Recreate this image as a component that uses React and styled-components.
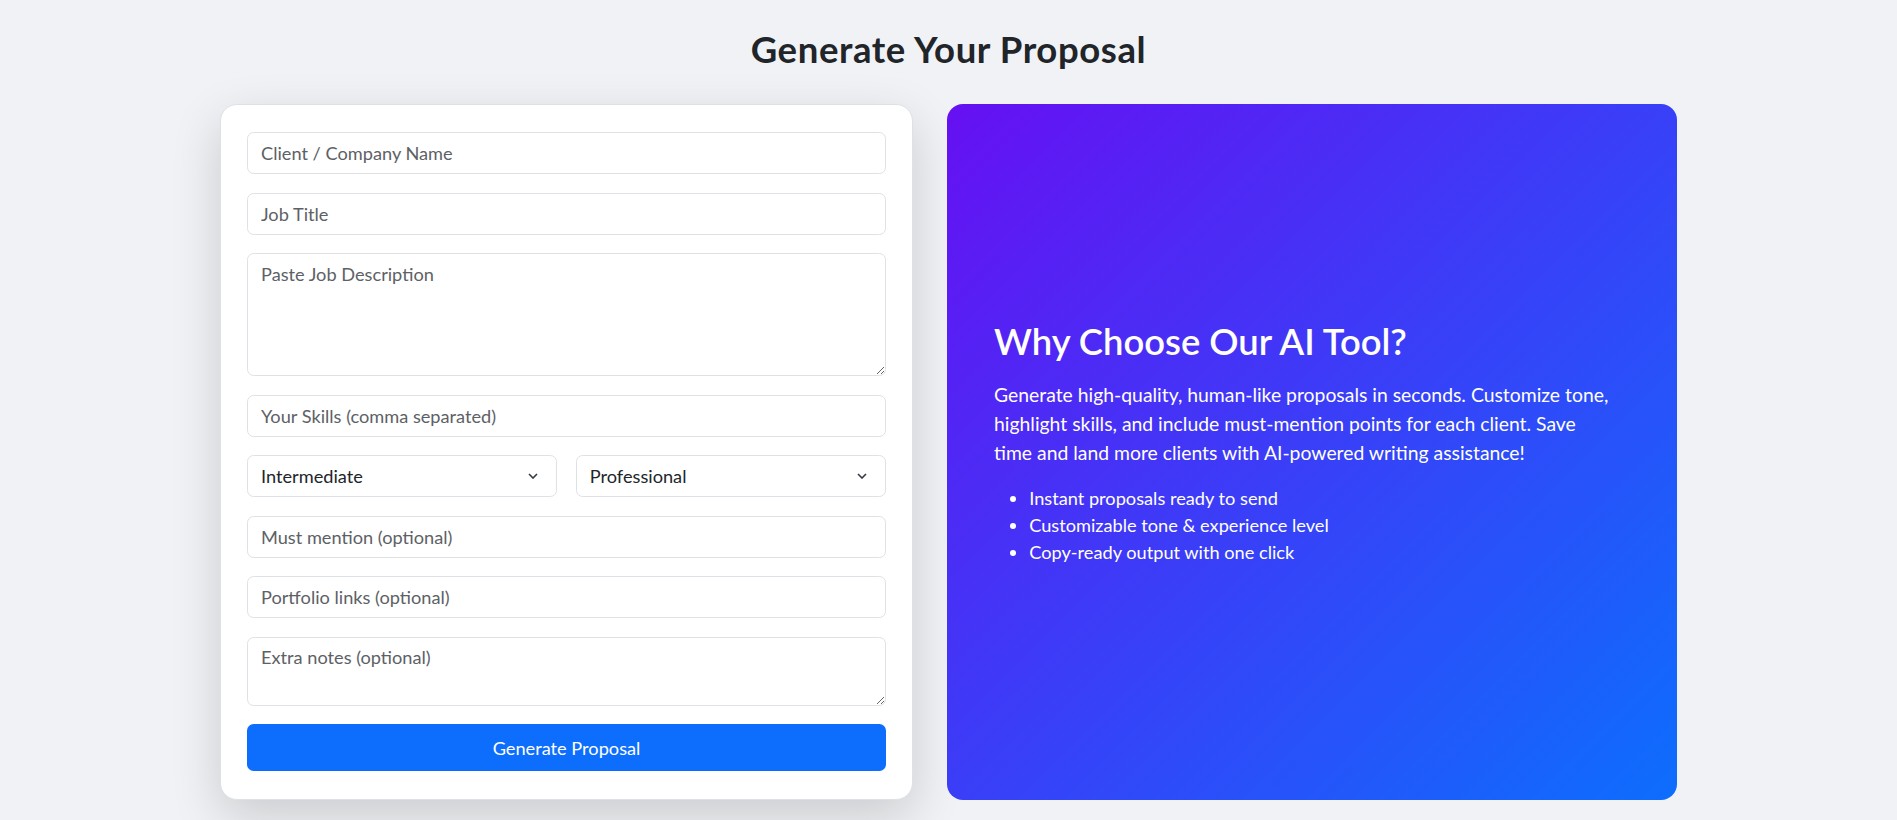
import React from "react";
import styled, { createGlobalStyle } from "styled-components";

const GlobalStyle = createGlobalStyle`
  * {
    box-sizing: border-box;
  }
  body {
    margin: 0;
    background: #f0f2f5;
    font-family: Lato, "Noto Sans", sans-serif;
    color: #212529;
  }
`;

const Page = styled.div`
  padding: 28px 0 20px;
`;

const PageTitle = styled.h2`
  margin: 0 0 34px;
  text-align: center;
  font-size: 36.5px;
  font-weight: 700;
  letter-spacing: 0.6px;
  line-height: 1.16;
  color: #212529;
`;

const Row = styled.div`
  display: flex;
  justify-content: center;
  align-items: stretch;
  gap: 34px;
`;

const FormCard = styled.form`
  width: 693px;
  padding: 27px 26px 28px;
  background: #fff;
  border: 1px solid #dee2e6;
  border-radius: 17px;
  box-shadow: 0 17px 50px rgba(0, 0, 0, 0.16);
`;

const fieldBase = `
  display: block;
  width: 100%;
  margin: 0 0 18.5px;
  padding: 6.6px 13px;
  font-family: inherit;
  font-size: 18.2px;
  line-height: 1.5;
  color: #212529;
  background: #fff;
  border: 1px solid #dee2e6;
  border-radius: 6.6px;
  outline: none;
  &::placeholder {
    color: #5d6166;
    opacity: 1;
  }
`;

const Input = styled.input`
  ${fieldBase}
  height: 42px;
`;

const TextArea = styled.textarea`
  ${fieldBase}
  height: ${(p) => p.$h}px;
  resize: vertical;
`;

const SelectRow = styled.div`
  display: grid;
  grid-template-columns: 1fr 1fr;
  gap: 18.5px;
`;

const SelectWrap = styled.div`
  position: relative;
`;

const Select = styled.select`
  ${fieldBase}
  height: 42px;
  appearance: none;
  padding-right: 40px;
`;

const Chevron = styled.svg`
  position: absolute;
  right: 19px;
  top: 18px;
  width: 10px;
  height: 6px;
  pointer-events: none;
`;

const SubmitButton = styled.button`
  display: block;
  width: 100%;
  height: 47px;
  border: none;
  border-radius: 6.6px;
  background: #0d6efd;
  color: #fff;
  font-family: inherit;
  font-size: 18.2px;
  cursor: pointer;
`;

const InfoPanel = styled.div`
  width: 730px;
  display: flex;
  flex-direction: column;
  justify-content: center;
  padding: 0 47px;
  border-radius: 16px;
  color: #fff;
  background: linear-gradient(135deg, #6610f2 0%, #0d6efd 100%);
`;

const InfoTitle = styled.h2`
  margin: 0 0 17.6px;
  font-size: 36.4px;
  font-weight: 600;
  line-height: 1.16;
`;

const InfoText = styled.p`
  margin: 0 0 17.6px;
  font-size: 19.36px;
  line-height: 1.5;
`;

const FeatureList = styled.ul`
  margin: 0 0 17.6px;
  padding-left: 35.2px;
  font-size: 18.2px;
  line-height: 1.5;
`;

const ChevronIcon = () => (
  <Chevron viewBox="0 0 10 6" fill="none">
    <path d="M1 1l4 4 4-4" stroke="#343a40" strokeWidth="1.6" />
  </Chevron>
);

const DropDown = ({ value, options }) => (
  <SelectWrap>
    <Select defaultValue={value}>
      {options.map((o) => (
        <option key={o}>{o}</option>
      ))}
    </Select>
    <ChevronIcon />
  </SelectWrap>
);

export default function App() {
  return (
    <Page>
      <GlobalStyle />
      <PageTitle>Generate Your Proposal</PageTitle>
      <Row>
        <FormCard onSubmit={(e) => e.preventDefault()}>
          <Input placeholder="Client / Company Name" />
          <Input placeholder="Job Title" />
          <TextArea $h={123} placeholder="Paste Job Description" />
          <Input placeholder="Your Skills (comma separated)" />
          <SelectRow>
            <DropDown
              value="Intermediate"
              options={["Beginner", "Intermediate", "Expert"]}
            />
            <DropDown
              value="Professional"
              options={["Professional", "Friendly", "Formal", "Casual"]}
            />
          </SelectRow>
          <Input placeholder="Must mention (optional)" />
          <Input placeholder="Portfolio links (optional)" />
          <TextArea $h={69} placeholder="Extra notes (optional)" />
          <SubmitButton type="submit">Generate Proposal</SubmitButton>
        </FormCard>

        <InfoPanel>
          <InfoTitle>Why Choose Our AI Tool?</InfoTitle>
          <InfoText>
            Generate high-quality, human-like proposals in seconds. Customize
            tone,
            <br />
            highlight skills, and include must-mention points for each client.
            Save
            <br />
            time and land more clients with AI-powered writing assistance!
          </InfoText>
          <FeatureList>
            <li>Instant proposals ready to send</li>
            <li>Customizable tone &amp; experience level</li>
            <li>Copy-ready output with one click</li>
          </FeatureList>
        </InfoPanel>
      </Row>
    </Page>
  );
}
